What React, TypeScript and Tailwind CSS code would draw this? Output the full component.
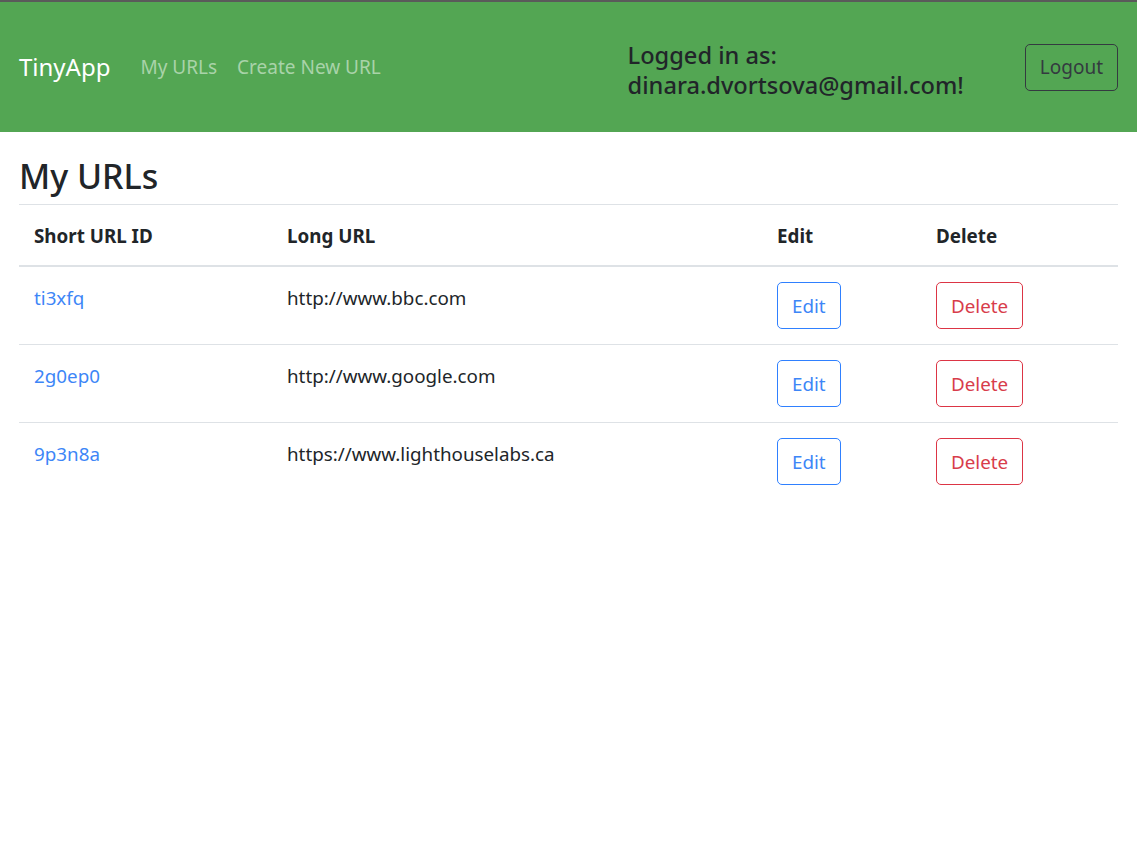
const urls = [
  { id: 'ti3xfq', long: 'http://www.bbc.com' },
  { id: '2g0ep0', long: 'http://www.google.com' },
  { id: '9p3n8a', long: 'https://www.lighthouselabs.ca' },
];

export default function App() {
  return (
    <div
      className="min-h-screen bg-white text-[#212529] border-t-2 border-[#5a5a5a]"
      style={{ fontFamily: '"Noto Sans", "Open Sans", sans-serif' }}
    >
      <nav className="flex h-[130px] items-center bg-[#53a653] px-[19px]">
        <a href="#" className="mr-[20px] text-[24px] leading-[30px] text-white">
          TinyApp
        </a>
        <div className="flex">
          <a href="#" className="px-[10px] text-[19px] leading-[30px] text-[#a9d3a9]">
            My URLs
          </a>
          <a href="#" className="px-[10px] text-[19px] leading-[30px] text-[#a9d3a9]">
            Create New URL
          </a>
        </div>
        <div className="ml-auto flex items-center gap-[61px]">
          <h5 className="pt-[5px] text-[23.6px] font-medium leading-[30px] text-[#212529]">
            Logged in as:
            <br />
            dinara.dvortsova@gmail.com!
          </h5>
          <button className="h-[47px] rounded-[5px] border border-[#343a40] px-[14px] text-[19px] leading-[30px] text-[#343a40]">
            Logout
          </button>
        </div>
      </nav>

      <main className="px-[19px]">
        <h2 className="pt-[20px] pb-[4px] text-[34px] font-medium leading-[48px]">My URLs</h2>
        <table className="w-full border-collapse text-[18.8px] leading-[30px]">
          <thead>
            <tr className="border-t border-[#dee2e6]">
              <th className="w-[253px] border-b-2 border-[#dee2e6] px-[15px] pt-[16px] pb-[14px] text-left font-bold">
                Short URL ID
              </th>
              <th className="w-[490px] border-b-2 border-[#dee2e6] px-[15px] pt-[16px] pb-[14px] text-left font-bold">
                Long URL
              </th>
              <th className="w-[159px] border-b-2 border-[#dee2e6] px-[15px] pt-[16px] pb-[14px] text-left font-bold">
                Edit
              </th>
              <th className="border-b-2 border-[#dee2e6] px-[15px] pt-[16px] pb-[14px] text-left font-bold">
                Delete
              </th>
            </tr>
          </thead>
          <tbody>
            {urls.map((u, i) => (
              <tr key={u.id} className={i > 0 ? 'border-t border-[#dee2e6]' : ''}>
                <td className="px-[15px] pt-[16px] pb-[14px] align-top">
                  <a href="#" className="text-[#3d86f7]">
                    {u.id}
                  </a>
                </td>
                <td className="px-[15px] pt-[16px] pb-[14px] align-top">{u.long}</td>
                <td className="px-[15px] pt-[15px] pb-[15px] align-top">
                  <button className="h-[47px] rounded-[5px] border border-[#2f80ff] px-[14px] pt-[1px] text-[#3d86f7]">
                    Edit
                  </button>
                </td>
                <td className="px-[15px] pt-[15px] pb-[15px] align-top">
                  <button className="h-[47px] rounded-[5px] border border-[#dc3545] px-[14px] pt-[1px] text-[#d83d4b]">
                    Delete
                  </button>
                </td>
              </tr>
            ))}
          </tbody>
        </table>
      </main>
    </div>
  );
}
